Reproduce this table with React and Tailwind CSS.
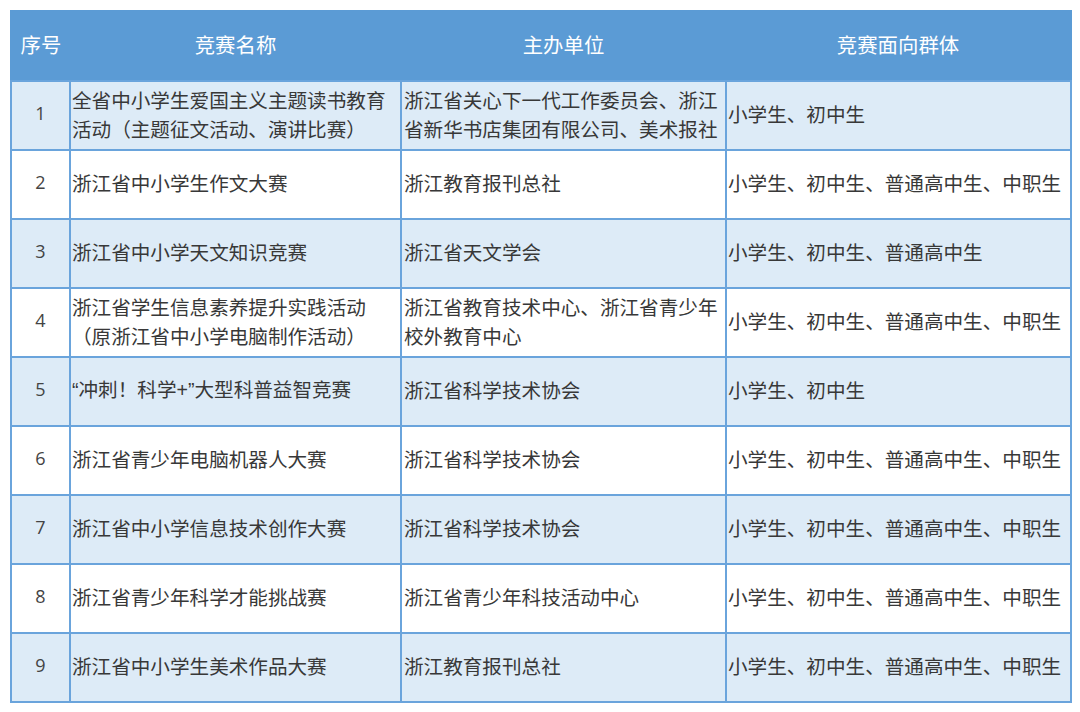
import React from 'react';

const Q = ({ children }) => <span className="font-['Liberation_Sans',sans-serif]">{children}</span>;

const rows = [
  ['1', '全省中小学生爱国主义主题读书教育活动（主题征文活动、演讲比赛）', '浙江省关心下一代工作委员会、浙江省新华书店集团有限公司、美术报社', '小学生、初中生'],
  ['2', '浙江省中小学生作文大赛', '浙江教育报刊总社', '小学生、初中生、普通高中生、中职生'],
  ['3', '浙江省中小学天文知识竞赛', '浙江省天文学会', '小学生、初中生、普通高中生'],
  ['4', '浙江省学生信息素养提升实践活动（原浙江省中小学电脑制作活动）', '浙江省教育技术中心、浙江省青少年校外教育中心', '小学生、初中生、普通高中生、中职生'],
  ['5', <><Q>“</Q>冲刺！科学<Q>+”</Q>大型科普益智竞赛</>, '浙江省科学技术协会', '小学生、初中生'],
  ['6', '浙江省青少年电脑机器人大赛', '浙江省科学技术协会', '小学生、初中生、普通高中生、中职生'],
  ['7', '浙江省中小学信息技术创作大赛', '浙江省科学技术协会', '小学生、初中生、普通高中生、中职生'],
  ['8', '浙江省青少年科学才能挑战赛', '浙江省青少年科技活动中心', '小学生、初中生、普通高中生、中职生'],
  ['9', '浙江省中小学生美术作品大赛', '浙江教育报刊总社', '小学生、初中生、普通高中生、中职生'],
];

export default function App() {
  return (
    <div className="bg-white w-[1080px] h-[712px] pt-[10px] pl-[10px] font-['Noto_Sans_CJK_SC','Noto_Sans',sans-serif]">
      <table className="w-[1060px] table-fixed border-collapse border-2 border-[#5b9bd5] text-[19.6px] leading-[29px] text-[#383838]">
        <colgroup>
          <col className="w-[59px]" />
          <col className="w-[331px]" />
          <col className="w-[325px]" />
          <col className="w-[345px]" />
        </colgroup>
        <thead>
          <tr className="h-[70px] bg-[#5b9bd5] text-white text-[20.4px]">
            <th className="font-normal pb-[3px]">序号</th>
            <th className="font-normal pb-[3px]">竞赛名称</th>
            <th className="font-normal pb-[3px]">主办单位</th>
            <th className="font-normal pb-[3px]">竞赛面向群体</th>
          </tr>
        </thead>
        <tbody>
          {rows.map((r, i) => (
            <tr key={r[0]} className={`h-[69px] ${i % 2 === 0 ? 'bg-[#ddebf7]' : 'bg-white'}`}>
              <td className="border-2 border-[#6aa4dc] pb-[4px] text-center text-[#444] font-['Open_Sans',sans-serif] text-[18px]">{r[0]}</td>
              <td className="border-2 border-[#6aa4dc] pl-[1px] pr-[3px] pb-[4px]">{r[1]}</td>
              <td className="border-2 border-[#6aa4dc] pl-[2px] pr-[3px] pb-[4px]">{r[2]}</td>
              <td className="border-2 border-[#6aa4dc] pl-[1px] pb-[4px] whitespace-nowrap">{r[3]}</td>
            </tr>
          ))}
        </tbody>
      </table>
    </div>
  );
}
